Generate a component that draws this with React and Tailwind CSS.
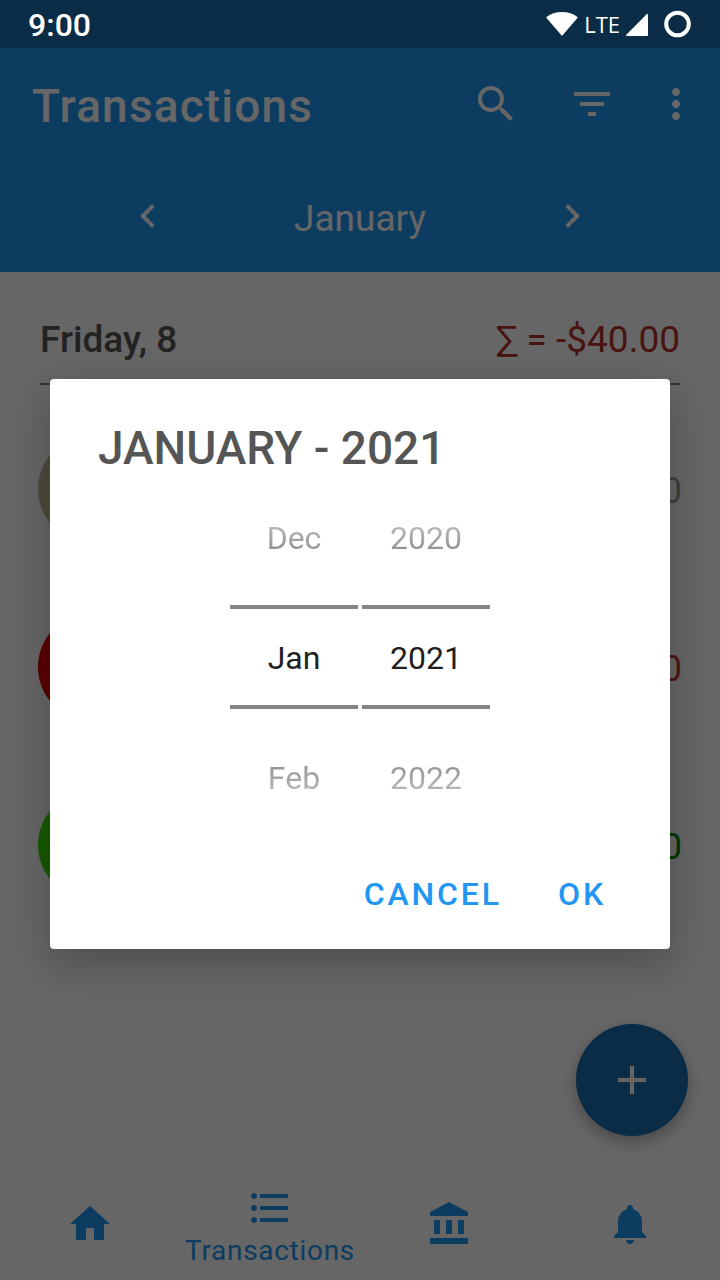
import {
  MdSearch,
  MdFilterList,
  MdMoreVert,
  MdChevronLeft,
  MdChevronRight,
  MdAdd,
} from "react-icons/md";

const transactions = [
  { id: 1, amount: "$0.00", dot: "bg-[#c3b998]", text: "text-[#9c9c9c]" },
  { id: 2, amount: "-$80.00", dot: "bg-[#e00000]", text: "text-[#c0392b]" },
  { id: 3, amount: "$40.00", dot: "bg-[#38e000]", text: "text-[#008a00]" },
];

const navIcons = {
  home: "M10 20v-6h4v6h5v-8h3L12 3 2 12h3v8z",
  list: "M4 10.5c-.83 0-1.5.67-1.5 1.5s.67 1.5 1.5 1.5 1.5-.67 1.5-1.5-.67-1.5-1.5-1.5zm0-6c-.83 0-1.5.67-1.5 1.5S3.17 7.5 4 7.5 5.5 6.83 5.5 6 4.83 4.5 4 4.5zm0 12c-.83 0-1.5.68-1.5 1.5s.68 1.5 1.5 1.5 1.5-.68 1.5-1.5-.67-1.5-1.5-1.5zM7 19h14v-2H7v2zm0-6h14v-2H7v2zm0-8v2h14V5H7z",
  bank: "M4 10v7h3v-7H4zm6 0v7h3v-7h-3zM2 22h19v-3H2v3zm14-12v7h3v-7h-3zm-4.5-9L2 6v2h19V6l-9.5-5z",
  bell: "M12 22c1.1 0 2-.9 2-2h-4c0 1.1.89 2 2 2zm6-6v-5c0-3.07-1.64-5.64-4.5-6.32V4c0-.83-.67-1.5-1.5-1.5s-1.5.67-1.5 1.5v.68C7.63 5.36 6 7.92 6 11v5l-2 2v1h16v-1l-2-2z",
};

function StatusBar() {
  return (
    <div className="relative z-20 flex h-12 items-center bg-[#0a2c46] px-7 text-white">
      <span className="flex-1 pt-0.5 text-[32px] font-medium leading-8">9:00</span>
      <svg className="mr-1.5 h-6 w-8" viewBox="0 0 32 24" fill="currentColor" aria-hidden="true">
        <path d="M.6 5C4.800 1.600 10 0 16 0s11.200 1.600 15.400 5q.400.400 0 .9L16.600 23.300q-.600.700-1.200 0L.5 5.900Q.2 5.400.6 5z" />
      </svg>
      <span className="mr-1 font-['Open_Sans',sans-serif] text-[22px] leading-6">LTE</span>
      <svg className="mr-4 h-6 w-6" viewBox="0 0 24 24" fill="currentColor" aria-hidden="true">
        <path d="M24 2.500v20.500q0 1-1 1H3q-1.800 0-.7-1.300L22.700 2.200Q24 1.200 24 2.500z" />
      </svg>
      <svg className="h-7 w-7" viewBox="0 0 28 28" fill="none" aria-hidden="true">
        <circle cx="13.500" cy="14" r="11.300" stroke="currentColor" strokeWidth="4" />
      </svg>
    </div>
  );
}

function IconButton({ label, className, children }) {
  return (
    <button type="button" aria-label={label} className={`flex items-center justify-center ${className}`}>
      {children}
    </button>
  );
}

function NavItem({ icon, label, active }) {
  return (
    <a
      href="#"
      aria-label={label}
      aria-current={active ? "page" : undefined}
      className="flex flex-1 flex-col items-center justify-center text-[#2196f3]"
    >
      <svg className="size-12" viewBox="0 0 24 24" fill="currentColor" aria-hidden="true">
        <path d={navIcons[icon]} />
      </svg>
      {active && <span className="h-8 text-[28px] leading-[38px] tracking-wide">{label}</span>}
    </a>
  );
}

function Picker({ label, previous, value, next }) {
  return (
    <div className="flex w-32 flex-col text-[32px] leading-10">
      <button
        type="button"
        className="h-32 bg-linear-to-b from-[#cccccc] from-30% to-[#808080] to-65% bg-clip-text pb-1.5 text-transparent"
      >
        {previous}
      </button>
      <input
        type="text"
        aria-label={label}
        defaultValue={value}
        className="h-26 w-full border-y-4 border-[#858585] pt-0.5 text-center text-[#1f1f1f] outline-none"
      />
      <button
        type="button"
        className="h-32 bg-linear-to-b from-[#858585] from-35% to-[#cccccc] to-75% bg-clip-text pt-2.5 text-transparent"
      >
        {next}
      </button>
    </div>
  );
}

export default function App() {
  return (
    <div className="relative flex min-h-screen flex-col bg-white font-['Roboto',sans-serif]">
      <StatusBar />

      <header className="bg-[#2196f3] text-white">
        <div className="flex h-28 items-center pl-8 pr-2">
          <h1 className="flex-1 pt-1 text-[46px] font-medium leading-14 tracking-wide">Transactions</h1>
          <IconButton label="Search" className="h-24 w-24">
            <MdSearch className="size-12" />
          </IconButton>
          <IconButton label="Filter" className="h-24 w-24">
            <MdFilterList className="size-12" />
          </IconButton>
          <IconButton label="More options" className="h-24 w-18">
            <MdMoreVert className="size-12" />
          </IconButton>
        </div>
        <div className="flex h-28 items-center justify-between px-31">
          <IconButton label="Previous month" className="size-12">
            <MdChevronLeft className="size-12" />
          </IconButton>
          <span className="pt-1.5 text-[37px] leading-10">January</span>
          <IconButton label="Next month" className="size-12">
            <MdChevronRight className="size-12" />
          </IconButton>
        </div>
      </header>

      <main className="flex-1 px-10 pt-11">
        <div className="flex items-center justify-between border-b-2 border-[#808080] pb-[19px] text-[37px] leading-12">
          <h2 className="font-medium text-[#555555]">Friday, 8</h2>
          <span className="text-[#b53228]">∑ = -$40.00</span>
        </div>
        <ul className="pt-4">
          {transactions.map((item) => (
            <li key={item.id} className="-mx-0.5 flex h-44.5 items-center justify-between">
              <span className={`mb-0.5 size-27 rounded-full ${item.dot}`} />
              <span className={`pt-0.5 text-[36px] leading-10 ${item.text}`}>{item.amount}</span>
            </li>
          ))}
        </ul>
      </main>

      <button
        type="button"
        aria-label="Add transaction"
        className="absolute bottom-36 right-8 flex size-28 items-center justify-center rounded-full bg-[#196eaf] text-white shadow-[0_6px_16px_rgba(0,0,0,0.3)]"
      >
        <MdAdd className="size-12" />
      </button>

      <nav className="flex h-28 bg-white shadow-[0_-1px_3px_rgba(0,0,0,0.05)]">
        <NavItem icon="home" label="Home" />
        <NavItem icon="list" label="Transactions" active />
        <NavItem icon="bank" label="Accounts" />
        <NavItem icon="bell" label="Notifications" />
      </nav>

      <div className="absolute inset-0 z-10 flex items-center justify-center bg-black/60 px-[50px] pt-12">
        <div
          role="dialog"
          aria-modal="true"
          aria-labelledby="dialog-title"
          className="w-full rounded bg-white px-12 pb-5 pt-10 shadow-[0_14px_40px_rgba(0,0,0,0.24)]"
        >
          <h2 id="dialog-title" className="text-[46px] font-medium leading-[58px] text-[#555555]">
            JANUARY - 2021
          </h2>
          <div className="flex justify-center gap-1">
            <Picker label="Month" previous="Dec" value="Jan" next="Feb" />
            <Picker label="Year" previous="2020" value="2021" next="2022" />
          </div>
          <div className="flex justify-end gap-6 pt-5 text-[32px] font-medium leading-10 tracking-[0.09em] text-[#2196f3]">
            <button type="button" className="h-18 px-4 pt-0.5">CANCEL</button>
            <button type="button" className="h-18 px-4 pt-0.5">OK</button>
          </div>
        </div>
      </div>
    </div>
  );
}
